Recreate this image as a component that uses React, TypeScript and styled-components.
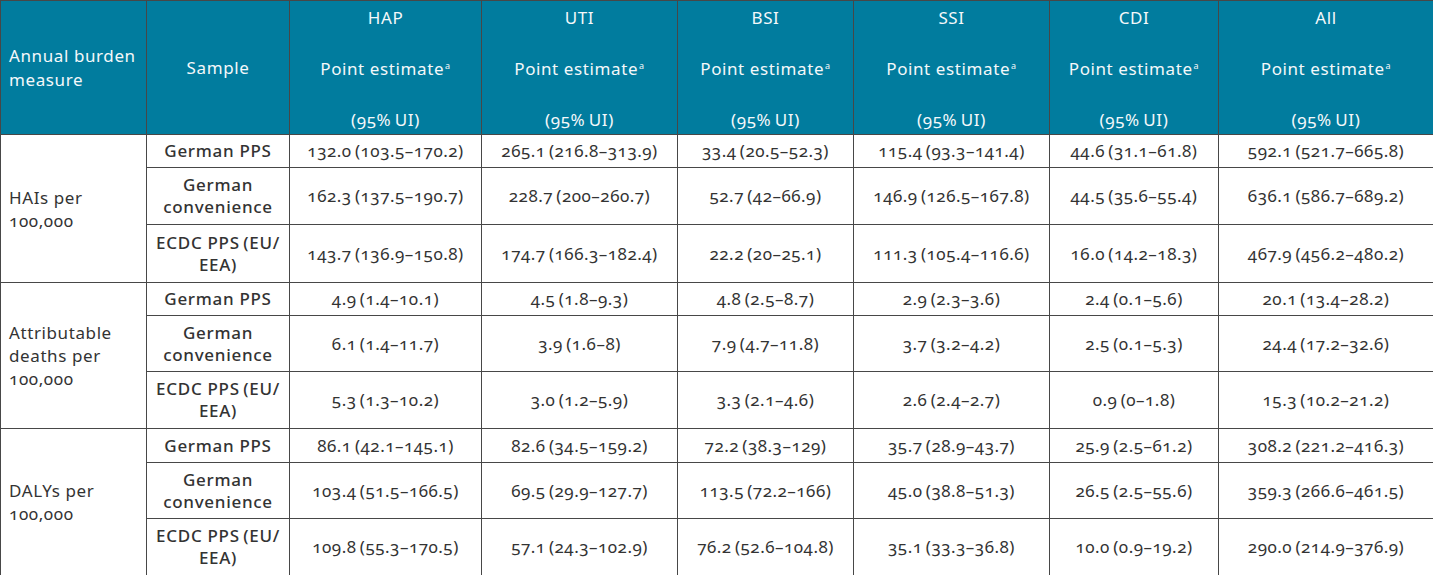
import React from "react";
import styled, { createGlobalStyle } from "styled-components";

const GlobalStyle = createGlobalStyle`
  html, body {
    margin: 0;
    padding: 0;
    background: #ffffff;
  }
  body {
    font-family: "Noto Sans", "Open Sans", "DejaVu Sans", sans-serif;
    color: #333333;
  }
`;

const Table = styled.table`
  width: 1433px;
  table-layout: fixed;
  border-collapse: collapse;
  font-variant-numeric: oldstyle-nums;
  font-feature-settings: "onum" 1;
`;

const Col = styled.col<{ $w: number }>`
  width: ${(p) => p.$w}px;
`;

const HeadRow = styled.tr`
  height: 134px;
`;

const HeadCell = styled.th<{ $left?: boolean }>`
  background: #017c9e;
  color: #f4f8fa;
  border: 1px solid #474747;
  font-weight: 400;
  font-size: 17px;
  letter-spacing: 0.6px;
  line-height: 24px;
  text-align: ${(p) => (p.$left ? "left" : "center")};
  padding: ${(p) => (p.$left ? "0 4px 0 8px" : "0 4px")};
  vertical-align: middle;
`;

const HeadStack = styled.div`
  display: flex;
  flex-direction: column;
  align-items: center;
  gap: 27px;
  padding-top: 2px;
`;

const Sup = styled.sup`
  font-size: 9px;
  line-height: 0;
  vertical-align: 6px;
  margin-left: 1px;
`;

const BodyRow = styled.tr<{ $h: number }>`
  height: ${(p) => p.$h}px;
`;

const GroupCell = styled.td`
  border: 1px solid #474747;
  padding: 0 4px 0 8px;
  text-align: left;
  vertical-align: middle;
  font-size: 17px;
  line-height: 23px;
  letter-spacing: 0.6px;
  color: #333333;
`;

const SampleCell = styled.td`
  border: 1px solid #474747;
  padding: 0 2px;
  text-align: center;
  vertical-align: middle;
  font-size: 17px;
  font-weight: 500;
  line-height: 22px;
  letter-spacing: 0.7px;
  color: #333333;
`;

const ValueCell = styled.td`
  border: 1px solid #474747;
  padding: 0 4px;
  text-align: center;
  vertical-align: middle;
  font-size: 17px;
  line-height: 22px;
  letter-spacing: 0.5px;
  color: #333333;
  white-space: nowrap;
`;

const columns = ["HAP", "UTI", "BSI", "SSI", "CDI", "All"];
const widths = [146, 143, 192, 196, 176, 196, 169, 215];

type Row = { sample: React.ReactNode; values: string[]; h: number };
type Group = { label: React.ReactNode; rows: Row[] };

const GP = "German PPS";
const GC = (
  <>
    German
    <br />
    convenience
  </>
);
const EC = (
  <>
    ECDC PPS{"\u2009"}(EU/
    <br />
    EEA)
  </>
);

const v = (a: string, b: string) => `${a}\u2009(${b})`;

const groups: Group[] = [
  {
    label: (
      <>
        HAIs per
        <br />
        100,000
      </>
    ),
    rows: [
      {
        sample: GP,
        h: 33,
        values: [
          v("132.0", "103.5–170.2"),
          v("265.1", "216.8–313.9"),
          v("33.4", "20.5–52.3"),
          v("115.4", "93.3–141.4"),
          v("44.6", "31.1–61.8"),
          v("592.1", "521.7–665.8"),
        ],
      },
      {
        sample: GC,
        h: 57,
        values: [
          v("162.3", "137.5–190.7"),
          v("228.7", "200–260.7"),
          v("52.7", "42–66.9"),
          v("146.9", "126.5–167.8"),
          v("44.5", "35.6–55.4"),
          v("636.1", "586.7–689.2"),
        ],
      },
      {
        sample: EC,
        h: 58,
        values: [
          v("143.7", "136.9–150.8"),
          v("174.7", "166.3–182.4"),
          v("22.2", "20–25.1"),
          v("111.3", "105.4–116.6"),
          v("16.0", "14.2–18.3"),
          v("467.9", "456.2–480.2"),
        ],
      },
    ],
  },
  {
    label: (
      <>
        Attributable
        <br />
        deaths per
        <br />
        100,000
      </>
    ),
    rows: [
      {
        sample: GP,
        h: 33,
        values: [
          v("4.9", "1.4–10.1"),
          v("4.5", "1.8–9.3"),
          v("4.8", "2.5–8.7"),
          v("2.9", "2.3–3.6"),
          v("2.4", "0.1–5.6"),
          v("20.1", "13.4–28.2"),
        ],
      },
      {
        sample: GC,
        h: 56,
        values: [
          v("6.1", "1.4–11.7"),
          v("3.9", "1.6–8"),
          v("7.9", "4.7–11.8"),
          v("3.7", "3.2–4.2"),
          v("2.5", "0.1–5.3"),
          v("24.4", "17.2–32.6"),
        ],
      },
      {
        sample: EC,
        h: 57,
        values: [
          v("5.3", "1.3–10.2"),
          v("3.0", "1.2–5.9"),
          v("3.3", "2.1–4.6"),
          v("2.6", "2.4–2.7"),
          v("0.9", "0–1.8"),
          v("15.3", "10.2–21.2"),
        ],
      },
    ],
  },
  {
    label: (
      <>
        DALYs per
        <br />
        100,000
      </>
    ),
    rows: [
      {
        sample: GP,
        h: 34,
        values: [
          v("86.1", "42.1–145.1"),
          v("82.6", "34.5–159.2"),
          v("72.2", "38.3–129"),
          v("35.7", "28.9–43.7"),
          v("25.9", "2.5–61.2"),
          v("308.2", "221.2–416.3"),
        ],
      },
      {
        sample: GC,
        h: 56,
        values: [
          v("103.4", "51.5–166.5"),
          v("69.5", "29.9–127.7"),
          v("113.5", "72.2–166"),
          v("45.0", "38.8–51.3"),
          v("26.5", "2.5–55.6"),
          v("359.3", "266.6–461.5"),
        ],
      },
      {
        sample: EC,
        h: 57,
        values: [
          v("109.8", "55.3–170.5"),
          v("57.1", "24.3–102.9"),
          v("76.2", "52.6–104.8"),
          v("35.1", "33.3–36.8"),
          v("10.0", "0.9–19.2"),
          v("290.0", "214.9–376.9"),
        ],
      },
    ],
  },
];

export default function App() {
  return (
    <>
      <GlobalStyle />
      <Table>
        <colgroup>
          {widths.map((w, i) => (
            <Col key={i} $w={w} />
          ))}
        </colgroup>
        <thead>
          <HeadRow>
            <HeadCell $left>
              Annual burden
              <br />
              measure
            </HeadCell>
            <HeadCell>Sample</HeadCell>
            {columns.map((c) => (
              <HeadCell key={c}>
                <HeadStack>
                  <span>{c}</span>
                  <span>
                    Point estimate<Sup>a</Sup>
                  </span>
                  <span>(95%{"\u2009"}UI)</span>
                </HeadStack>
              </HeadCell>
            ))}
          </HeadRow>
        </thead>
        <tbody>
          {groups.map((g, gi) =>
            g.rows.map((r, ri) => (
              <BodyRow key={`${gi}-${ri}`} $h={r.h}>
                {ri === 0 && <GroupCell rowSpan={g.rows.length}>{g.label}</GroupCell>}
                <SampleCell>{r.sample}</SampleCell>
                {r.values.map((val, vi) => (
                  <ValueCell key={vi}>{val}</ValueCell>
                ))}
              </BodyRow>
            ))
          )}
        </tbody>
      </Table>
    </>
  );
}
